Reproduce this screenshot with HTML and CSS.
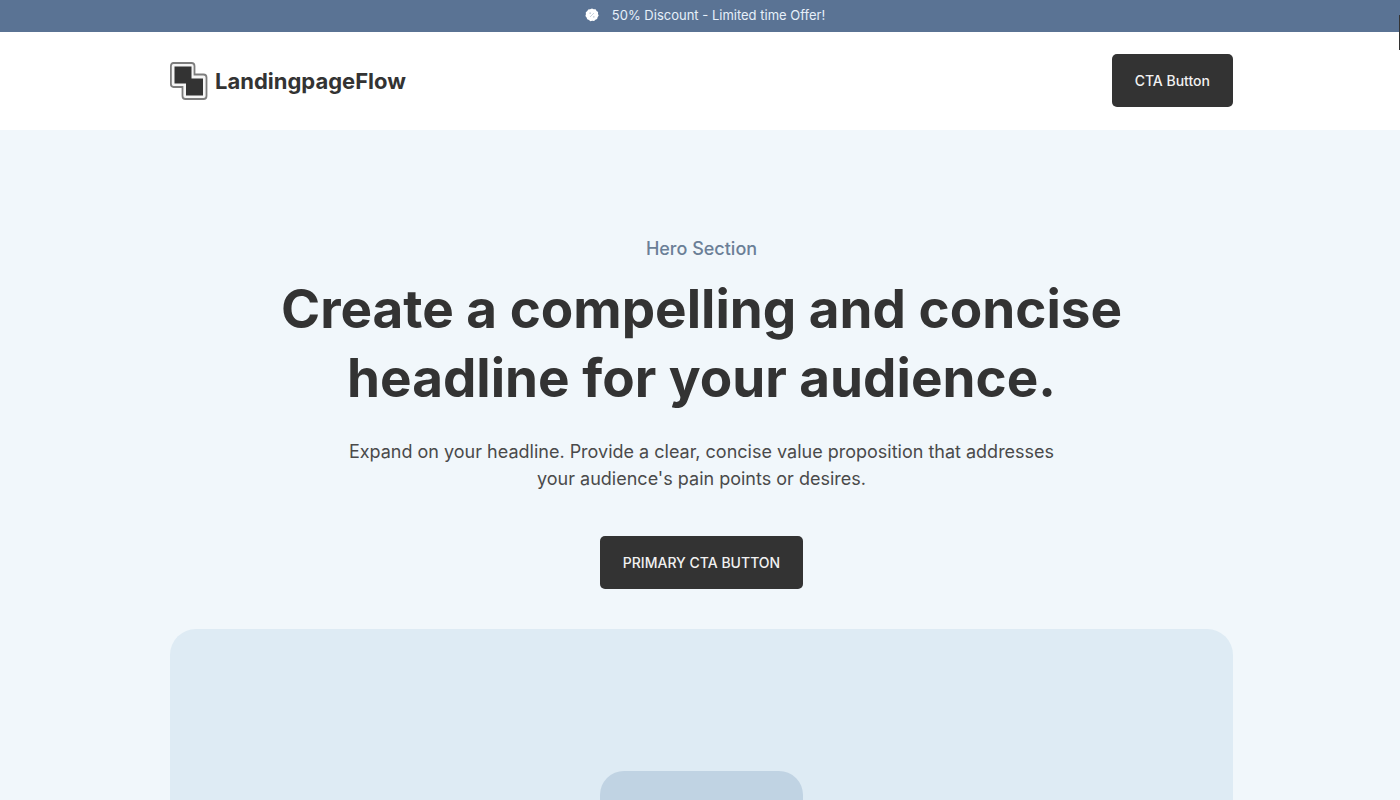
FILE: index.html
```html
<!DOCTYPE html>
<html lang="en">
<head>
  <meta charset="UTF-8" />
  <meta name="viewport" content="width=device-width, initial-scale=1.0" />
  <title>LandingpageFlow</title>
  <link rel="stylesheet" href="styles.css">
</head>
<body>
  <div class="promo-bar">
    <svg class="promo-icon" viewBox="0 0 14 14" aria-hidden="true">
      <path d="M7 0.4 L8.7 1.2 L10.6 1.3 L11.6 2.9 L13.1 4 L13 5.9 L13.7 7.6 L12.6 9.2 L12.1 11 L10.4 11.7 L9.1 13.1 L7.2 12.8 L5.3 13.2 L4 11.9 L2.2 11.3 L1.6 9.5 L0.4 8 L0.9 6.2 L0.8 4.3 L2.3 3.1 L3.2 1.4 L5.1 1.3 Z" fill="#fff"/>
      <path d="M5 9 L9 5" stroke="#c9d2dc" stroke-width="1"/>
      <circle cx="5.2" cy="5.2" r="0.9" fill="#c9d2dc"/>
      <circle cx="8.8" cy="8.8" r="0.9" fill="#c9d2dc"/>
    </svg>
    <span>50% Discount - Limited time Offer!</span>
  </div>

  <header class="header">
    <div class="container header-inner">
      <a href="#" class="logo">
        <svg class="logo-mark" viewBox="0 0 38 38" aria-hidden="true">
          <path d="M3.5 1 H21.5 Q24.5 1 24.5 4 V12.5 H33.5 Q36.5 12.5 36.5 15.5 V34 Q36.5 37 33.5 37 H15.5 Q12.5 37 12.5 34 V25 H3.5 Q0.9 25 0.9 22 V4 Q0.9 1 3.5 1 Z" fill="#f5f5f5" stroke="#7d7d7d" stroke-width="1.8"/>
          <path d="M4.5 4.5 H21.5 V16.5 H33 V33.5 H16 V21.5 H4.5 Z" fill="#333"/>
        </svg>
        <span>LandingpageFlow</span>
      </a>
      <button type="button" class="btn">CTA Button</button>
    </div>
  </header>

  <main class="hero">
    <div class="container hero-inner">
      <p class="eyebrow">Hero Section</p>
      <h1>Create a compelling and concise headline for your audience.</h1>
      <p class="subtitle">Expand on your headline. Provide a clear, concise value proposition that addresses your audience's pain points or desires.</p>
      <button type="button" class="btn">PRIMARY CTA BUTTON</button>
      <div class="media">
        <div class="media-placeholder"></div>
      </div>
    </div>
  </main>

  <div class="scroll-mark"></div>
</body>
</html>
```

FILE: styles.css
```css
* {
  box-sizing: border-box;
}

body {
  font-family: Inter, Arial, sans-serif;
  margin: 0;
  background-color: #fff;
  color: #333;
}

.container {
  max-width: 1063px;
  margin: 0 auto;
}

.promo-bar {
  display: flex;
  align-items: center;
  justify-content: center;
  gap: 13px;
  min-height: 32px;
  padding: 0 0 2px 10px;
  background-color: #5a7394;
  color: #e6f0fa;
  font-size: 13px;
  line-height: 20px;
}

.promo-icon {
  width: 14px;
  height: 14px;
}

.header {
  padding: 22px 0 23px 3px;
}

.header-inner {
  display: flex;
  align-items: center;
  justify-content: space-between;
}

.logo {
  display: flex;
  align-items: center;
  gap: 7px;
  color: #333;
  font-size: 22px;
  font-weight: 700;
  line-height: 38px;
  text-decoration: none;
}

.logo-mark {
  width: 38px;
  height: 38px;
}

.btn {
  padding: 16px 23px;
  border: none;
  border-radius: 5px;
  background-color: #333;
  color: #f1f1f1;
  font-family: inherit;
  font-size: 14px;
  font-weight: 500;
  line-height: 21px;
  cursor: pointer;
}

.hero {
  padding: 107px 0 80px 3px;
  background-color: #f1f7fb;
}

.hero-inner {
  display: flex;
  flex-direction: column;
  align-items: center;
  text-align: center;
}

.eyebrow {
  margin: 0 0 14px;
  color: #6b7f97;
  font-size: 18px;
  font-weight: 500;
  line-height: 24px;
}

h1 {
  max-width: 900px;
  margin: 0 0 25px;
  font-size: 53px;
  font-weight: 700;
  line-height: 69px;
}

.subtitle {
  max-width: 720px;
  margin: 0 0 44px;
  color: #4a4a4a;
  font-size: 18px;
  line-height: 27px;
}

.media {
  display: flex;
  justify-content: center;
  width: 100%;
  margin-top: 40px;
  padding: 142px 0;
  border-radius: 26px;
  background-color: #deebf4;
}

.media-placeholder {
  width: 203px;
  height: 203px;
  border-radius: 24px;
  background-color: #c0d3e3;
}

.scroll-mark {
  position: absolute;
  top: 15px;
  right: 0;
  width: 1px;
  height: 35px;
  background-color: #333;
}
```
